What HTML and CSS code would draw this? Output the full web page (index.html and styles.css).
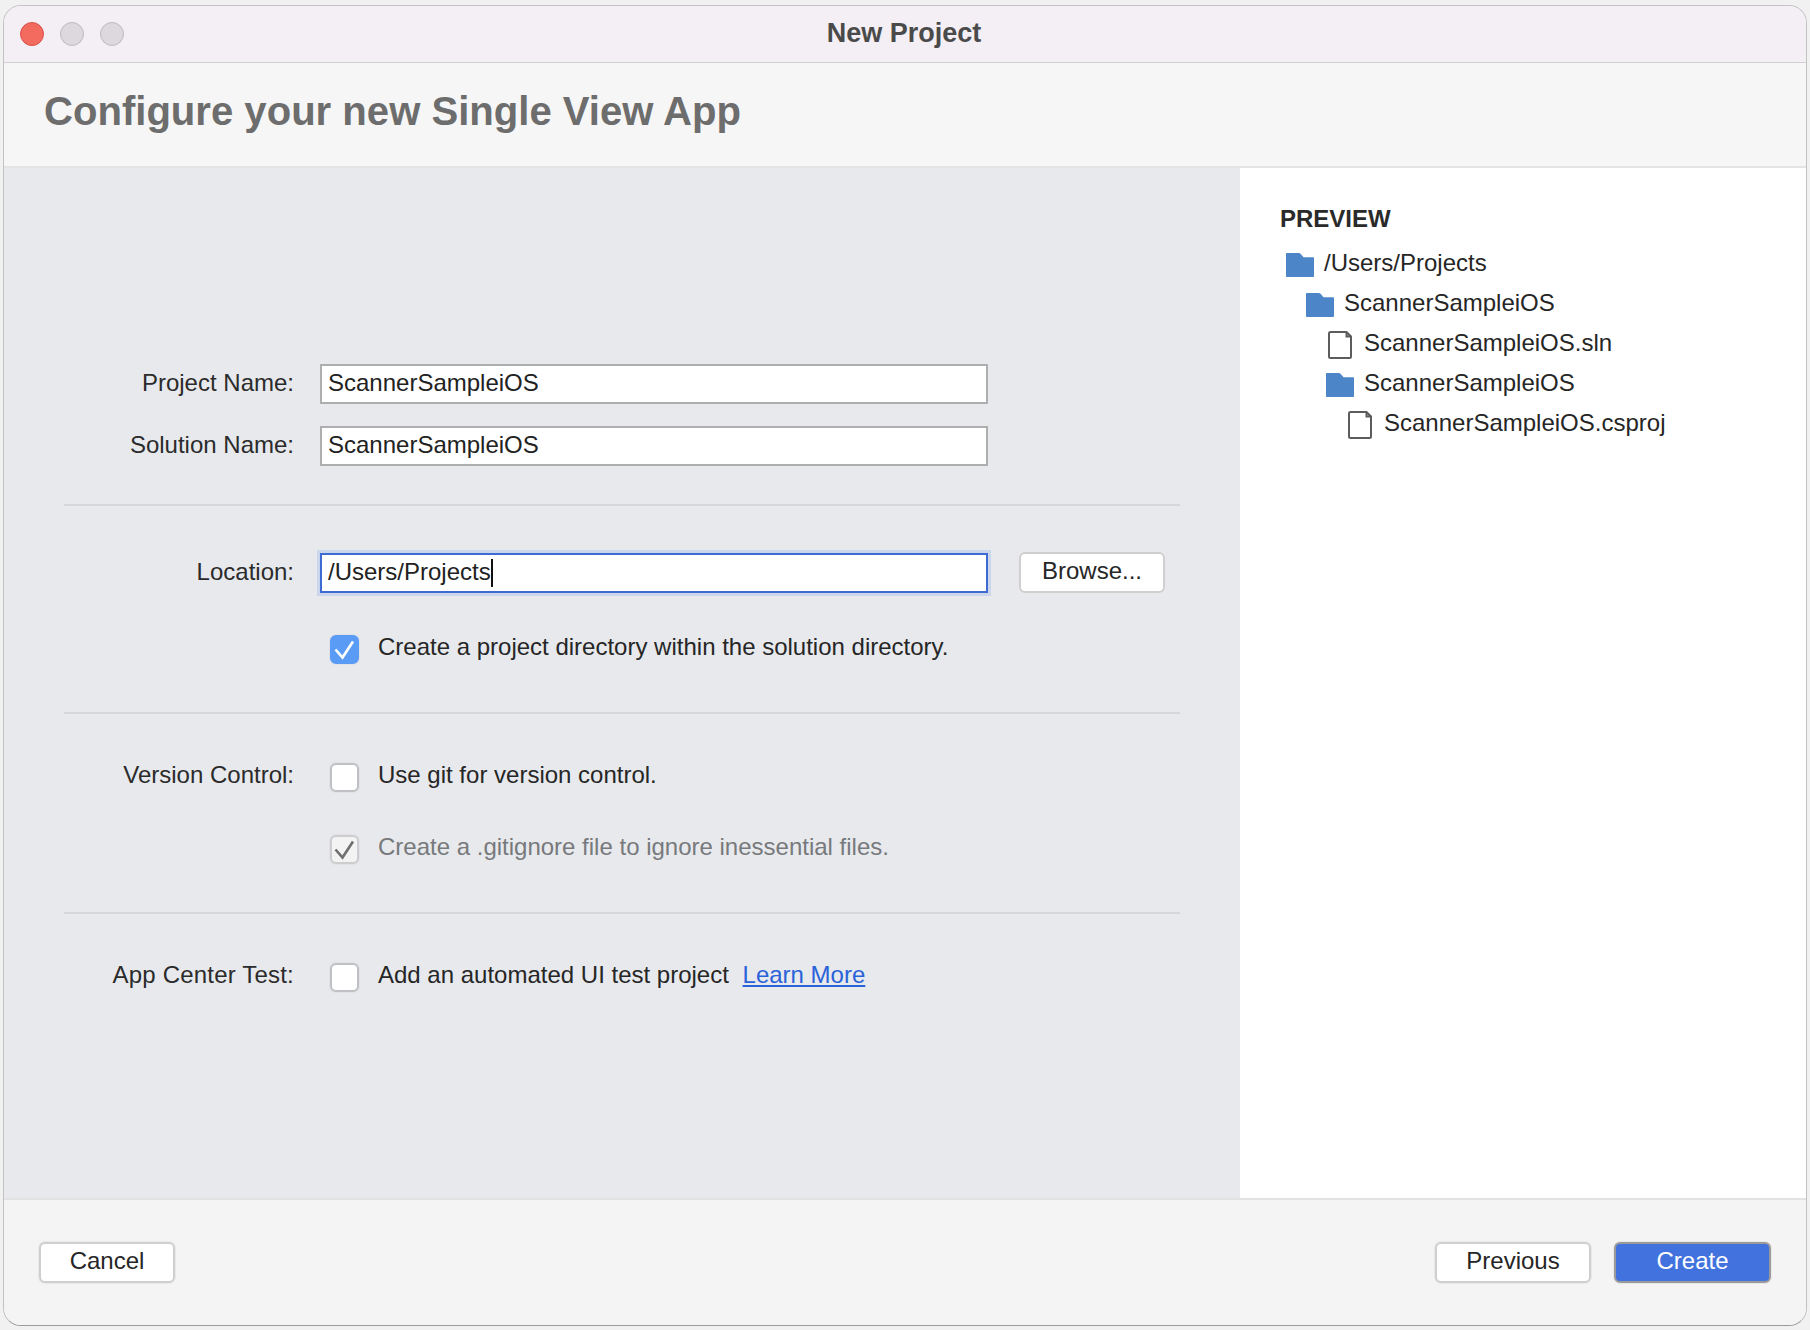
FILE: index.html
```html
<!DOCTYPE html>
<html lang="en">
<head>
    <meta charset="UTF-8">
    <meta name="viewport" content="width=device-width, initial-scale=1.0">
    <title>New Project</title>
    <link rel="stylesheet" href="styles.css">
</head>
<body>
    <svg class="defs" width="0" height="0">
        <symbol id="folder" viewBox="0 0 28 24">
            <path d="M1 0H12.5C13.5 0 14.2 .4 15 1.2L17.5 4.2H27C27.6 4.2 28 4.6 28 5.200V23C28 23.600 27.600 24 27 24H1C.4 24 0 23.600 0 23V1C0 .4 .4 0 1 0Z"/>
        </symbol>
        <symbol id="file" viewBox="0 0 24 28">
            <path d="M2.500 1H18.500L23 5.500V25.500C23 26.300 22.300 27 21.500 27H2.500C1.700 27 1 26.300 1 25.500V2.500C1 1.700 1.700 1 2.500 1ZM18.500 1V5.500H23"/>
        </symbol>
    </svg>

    <div class="window">
        <div class="titlebar">
            <div class="lights">
                <span class="light red"></span>
                <span class="light"></span>
                <span class="light"></span>
            </div>
            <div class="window-title">New Project</div>
        </div>

        <div class="header">
            <h1>Configure your new Single View App</h1>
        </div>

        <div class="main">
            <div class="form-panel">
                <div class="section first">
                    <div class="row">
                        <label>Project Name:</label>
                        <div class="field">ScannerSampleiOS</div>
                    </div>
                    <div class="row">
                        <label>Solution Name:</label>
                        <div class="field">ScannerSampleiOS</div>
                    </div>
                </div>

                <div class="section location">
                    <div class="row">
                        <label>Location:</label>
                        <div class="field focused"><span class="caret">/Users/Projects</span></div>
                        <button class="btn browse">Browse...</button>
                    </div>
                    <div class="row check-row">
                        <span></span>
                        <div class="check-line">
                            <span class="checkbox checked">
                                <svg viewBox="0 0 25 25"><path d="M3.500 12.500L10.500 20.500L21 4.500"/></svg>
                            </span>
                            <span class="check-text">Create a project directory within the solution directory.</span>
                        </div>
                    </div>
                </div>

                <div class="section version">
                    <div class="row check-row">
                        <label>Version Control:</label>
                        <div class="check-line">
                            <span class="checkbox"></span>
                            <span class="check-text">Use git for version control.</span>
                        </div>
                    </div>
                    <div class="row check-row">
                        <span></span>
                        <div class="check-line disabled">
                            <span class="checkbox dim">
                                <svg viewBox="0 0 25 25"><path d="M3.500 12.500L10.500 20.500L21 4.500"/></svg>
                            </span>
                            <span class="check-text">Create a .gitignore file to ignore inessential files.</span>
                        </div>
                    </div>
                </div>

                <div class="section last">
                    <div class="row check-row">
                        <label class="wide">App Center Test:</label>
                        <div class="check-line">
                            <span class="checkbox"></span>
                            <span class="check-text">Add an automated UI test project <a href="#">Learn More</a></span>
                        </div>
                    </div>
                </div>
            </div>

            <div class="preview">
                <h2>PREVIEW</h2>
                <ul class="tree">
                    <li class="depth-0"><svg class="icon folder"><use href="#folder"/></svg>/Users/Projects</li>
                    <li class="depth-1"><svg class="icon folder"><use href="#folder"/></svg>ScannerSampleiOS</li>
                    <li class="depth-2"><svg class="icon file"><use href="#file"/></svg>ScannerSampleiOS.sln</li>
                    <li class="depth-2"><svg class="icon folder"><use href="#folder"/></svg>ScannerSampleiOS</li>
                    <li class="depth-3"><svg class="icon file"><use href="#file"/></svg>ScannerSampleiOS.csproj</li>
                </ul>
            </div>
        </div>

        <div class="footer">
            <button class="btn cancel">Cancel</button>
            <div class="footer-right">
                <button class="btn previous">Previous</button>
                <button class="btn primary">Create</button>
            </div>
        </div>
    </div>
</body>
</html>
```

FILE: styles.css
```css
* {
    box-sizing: border-box;
}

html,
body {
    height: 100%;
}

body {
    margin: 0;
    padding: 5px 3px 4px;
    background-color: #f1f1f1;
    font-family: "Liberation Sans", Arial, sans-serif;
    font-size: 24px;
    color: #262626;
    overflow: hidden;
}

.defs {
    position: absolute;
}

.window {
    height: 100%;
    display: flex;
    flex-direction: column;
    border: 1px solid #c2c2c2;
    border-bottom-color: #9a9a9a;
    border-radius: 18px;
    overflow: hidden;
    background-color: #f5f5f5;
}

.titlebar {
    height: 57px;
    flex: none;
    display: grid;
    grid-template-columns: 1fr auto 1fr;
    align-items: center;
    background-color: #f3eff5;
    border-bottom: 1px solid #d2d0d3;
}

.lights {
    display: flex;
    gap: 16px;
    padding-left: 16px;
}

.light {
    width: 24px;
    height: 24px;
    border-radius: 50%;
    background-color: #dcd8de;
    border: 1px solid #bdb9c0;
}

.light.red {
    background-color: #f26b5e;
    border-color: #d9504a;
}

.window-title {
    font-size: 27px;
    line-height: 30px;
    padding-bottom: 3px;
    padding-right: 2px;
    font-weight: bold;
    color: #4a4a4a;
}

.header {
    height: 105px;
    flex: none;
    padding: 24px 0 0 40px;
    background-color: #f6f6f6;
    border-bottom: 2px solid #e4e4e6;
}

h1 {
    margin: 0;
    font-size: 40.100px;
    line-height: 48px;
    font-weight: bold;
    color: #6d6d6d;
}

.main {
    flex: 1;
    display: flex;
    min-height: 0;
}

.form-panel {
    width: 1236px;
    padding: 0 60px;
    background-color: #e7e9ed;
}

.preview {
    flex: 1;
    padding: 36px 36px 0 40px;
    background-color: #fff;
}

.section {
    display: flex;
    flex-direction: column;
    border-bottom: 2px solid #d6d7da;
}

.section.first {
    padding: 196px 0 38px;
    gap: 22px;
}

.section.location {
    padding: 46px 0 50px;
    gap: 40px;
}

.section.version {
    padding: 47px 0 50px;
    gap: 43px;
}

.section.last {
    padding-top: 47px;
    border-bottom: none;
}

.row {
    display: grid;
    grid-template-columns: 230px 668px auto;
    column-gap: 26px;
    align-items: center;
}

.row.check-row {
    grid-template-columns: 230px 1fr;
    height: 29px;
}

label {
    text-align: right;
    padding-bottom: 2px;
    color: #2b2b2b;
}

.check-row label {
    padding-bottom: 5px;
}

label.wide {
    letter-spacing: .2px;
}

.field {
    height: 40px;
    line-height: 34px;
    padding: 0 6px;
    background-color: #fff;
    border: 2px solid #aeaeae;
    color: #222;
}

.field.focused {
    border-color: #3d6bd1;
    box-shadow: 0 0 0 3px #cbd5ec;
}

.caret {
    display: inline-block;
    height: 28px;
    line-height: 26px;
    border-right: 2px solid #111;
}

.btn {
    height: 41px;
    padding: 0 0 3px;
    font-family: inherit;
    font-size: 24px;
    color: #262626;
    background-color: #fff;
    border: 2px solid #cfcfcf;
    border-radius: 6px;
    box-shadow: 0 0 0 1px #e9e9e9;
}

.browse {
    width: 146px;
    margin-left: 5px;
}

.check-line {
    display: flex;
    align-items: center;
    gap: 19px;
    padding-left: 10px;
}

.checkbox {
    width: 29px;
    height: 29px;
    flex: none;
    background-color: #fff;
    border: 2px solid #bfc0c3;
    border-radius: 6px;
    box-shadow: 0 0 0 1px #e0e2e6;
}

.checkbox svg {
    display: block;
    width: 25px;
    height: 25px;
    fill: none;
    stroke-width: 2.600;
}

.checkbox.checked {
    background-color: #5a9bf6;
    border-color: #5a9bf6;
}

.checkbox.checked svg {
    stroke: #fff;
}

.checkbox.dim {
    background-color: #f3f3f3;
    border-color: #cdcdcf;
}

.checkbox.dim svg {
    stroke: #6f6f6f;
}

.check-text {
    padding-bottom: 5px;
}

.disabled .check-text {
    color: #77797c;
}

a {
    margin-left: 7px;
    color: #2a62d9;
}

h2 {
    margin: 0 0 9px;
    font-size: 24px;
    line-height: 30px;
    font-weight: bold;
    color: #2a2a2a;
}

.tree {
    margin: 0;
    padding: 0;
    list-style: none;
}

.tree li {
    height: 40px;
    display: flex;
    align-items: center;
    color: #262626;
}

.depth-0 {
    padding-left: 6px;
}

.depth-1 {
    padding-left: 26px;
}

.depth-2 {
    padding-left: 46px;
}

.depth-3 {
    padding-left: 66px;
}

.icon {
    flex: none;
    margin-right: 10px;
    margin-top: 3px;
}

.icon.folder {
    width: 28px;
    height: 24px;
    fill: #4c86c8;
}

.icon.file {
    width: 24px;
    height: 28px;
    margin-left: 2px;
    margin-right: 12px;
    fill: #fff;
    stroke: #5c5c5c;
    stroke-width: 2;
}

.footer {
    height: 127px;
    flex: none;
    display: flex;
    justify-content: space-between;
    align-items: flex-start;
    padding: 42px 35px 0;
    background-color: #f4f4f4;
    border-top: 2px solid #e2e2e2;
}

.footer-right {
    display: flex;
    gap: 23px;
}

.cancel {
    width: 136px;
}

.previous {
    width: 156px;
}

.primary {
    width: 157px;
    color: #fff;
    background-color: #4272dd;
    border-color: #9a9a9a;
}
```
